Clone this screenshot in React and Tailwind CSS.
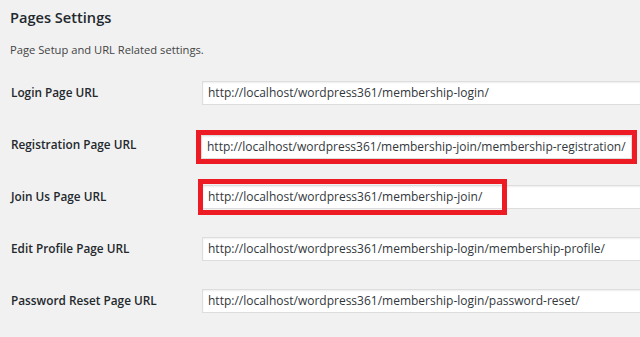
const rows = [
  { label: 'Login Page URL', value: 'http://localhost/wordpress361/membership-login/' },
  { label: 'Registration Page URL', value: 'http://localhost/wordpress361/membership-join/membership-registration/', mark: 'wrap' },
  { label: 'Join Us Page URL', value: 'http://localhost/wordpress361/membership-join/', mark: 'over' },
  { label: 'Edit Profile Page URL', value: 'http://localhost/wordpress361/membership-login/membership-profile/' },
  { label: 'Password Reset Page URL', value: 'http://localhost/wordpress361/membership-login/password-reset/' },
];

const Field = ({ value, className }) => (
  <div
    className={
      'h-[24px] bg-white border border-[#dddddd] shadow-[inset_0_1px_2px_rgba(0,0,0,0.07)] flex items-center pl-[5px] text-[12px] text-[#32373c] whitespace-nowrap overflow-hidden ' +
      (className || '')
    }
  >
    {value}
  </div>
);

const App = () => {
  return (
    <div
      className="w-[640px] h-[337px] bg-[#f1f1f1] overflow-hidden"
      style={{ fontFamily: '"Open Sans", "Noto Sans", sans-serif' }}
    >
      {/* Header */}
      <h2 className="text-[14.6px] font-semibold text-[#23282d] pl-[10px] pt-[6px] leading-[22px]">Pages Settings</h2>
      <p className="text-[11.2px] text-[#444] pl-[10px] mt-[14px] leading-[16px]">Page Setup and URL Related settings.</p>

      {/* Rows */}
      <div className="mt-[9px] flex flex-col">
        {rows.map((row) => (
          <div key={row.label} className="h-[52px] flex items-center">
            <div className="w-[202px] shrink-0 pl-[11px] text-[11.8px] font-semibold text-[#23282d]">{row.label}</div>
            {row.mark === 'wrap' ? (
              <div className="ml-[-6px] mt-[3px] w-[441px] shrink-0 border-[5px] border-[#ed1c24]">
                <Field value={row.value} className="w-full" />
              </div>
            ) : (
              <div className="relative flex-1">
                <Field value={row.value} className="w-[460px]" />
                {row.mark === 'over' && (
                  <div className="absolute left-[-4px] top-[-6px] w-[309px] h-[36px] border-[5px] border-[#ed1c24]" />
                )}
              </div>
            )}
          </div>
        ))}
      </div>
    </div>
  );
};

export default App;
